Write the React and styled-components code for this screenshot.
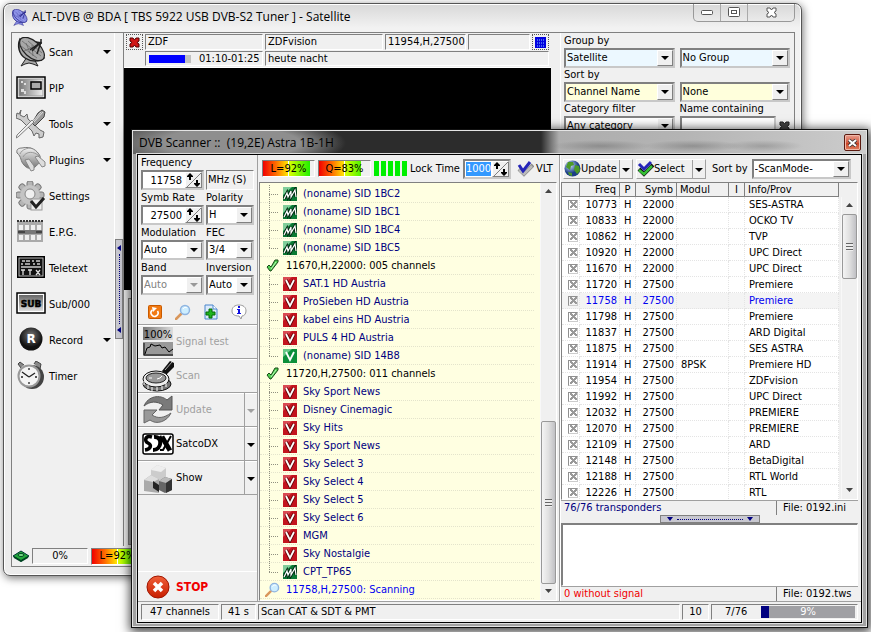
import React from 'react';
import styled, { createGlobalStyle, css } from 'styled-components';

const GlobalStyle = createGlobalStyle`
    * {
        box-sizing: border-box;
    }
    body {
        margin: 0;
        background: #fff;
        color: #000;
        font: 11px/14px "DejaVu Sans Condensed", "Liberation Sans", sans-serif;
    }
    button, input, select, textarea {
        margin: 0;
        padding: 0;
        border: 0;
        border-radius: 0;
        background: transparent;
        color: inherit;
        font: inherit;
        outline: none;
    }
`;

const Desktop = styled.div`
    position: relative;
    min-height: 100vh;
    overflow: hidden;
`;

/* ---------- shared parts ---------- */

const sunken = css`
    border: 1px solid;
    border-color: #808080 #fff #fff #808080;
`;

const deep = css`
    border: 2px solid;
    border-color: #808080 #c8c8c8 #c8c8c8 #808080;
`;

const Cell = styled.div`
    ${sunken}
    display: flex;
    align-items: center;
    justify-content: ${props => props.$align || 'flex-start'};
    flex: ${props => props.$width ? `0 0 ${props.$width}px` : '1'};
    min-width: 0;
    height: ${props => props.$height || 16}px;
    padding: 0 2px;
    white-space: nowrap;
    overflow: hidden;
`;

const SelectBox = styled.span`
    ${deep}
    display: grid;
    flex: ${props => props.$width ? `0 0 ${props.$width}px` : '1'};
    min-width: 0;
    height: 20px;
    background: ${props => props.$bg || '#fff'};
    color: ${props => props.$off ? '#808080' : '#000'};
`;

const NativeSelect = styled.select`
    grid-area: 1 / 1;
    appearance: none;
    width: 100%;
    min-width: 0;
    height: 16px;
    padding: 0 18px 0 1px;
    opacity: 1;
`;

const DropKnob = styled.span`
    grid-area: 1 / 1;
    justify-self: end;
    display: flex;
    align-items: center;
    justify-content: center;
    width: 16px;
    height: 16px;
    border: 1px solid;
    border-color: #fff #808080 #808080 #fff;
    background: #f0f0f0;
    pointer-events: none;
`;

const Arrow = ({color = '#000'}) => (
    <svg width="8" height="4" viewBox="0 0 8 4" aria-hidden="true"><path d="M0 0h8L4 4z" fill={color} /></svg>
);

const Select = ({label, value, bg, off, width}) => (
    <SelectBox $bg={bg} $off={off} $width={width}>
        <NativeSelect aria-label={label} disabled={off}>
            <option>{value}</option>
        </NativeSelect>
        <DropKnob><Arrow color={off ? '#999' : '#000'} /></DropKnob>
    </SelectBox>
);

const SpinBox = styled.span`
    ${deep}
    display: flex;
    flex: 0 0 ${props => props.$width}px;
    min-width: 0;
    height: 20px;
    background: #fff;
`;

const SpinInput = styled.input`
    flex: 1;
    width: 0;
    min-width: 0;
    height: 16px;
    padding: 0 3px;
    text-align: right;
    ${props => props.$picked && css`
        padding: 0;
        background: #3399ff;
        color: #fff;
        border: 1px solid #fff;
        text-align: left;
    `}
`;

const SpinKnob = styled.button`
    flex: none;
    width: 17px;
    height: 16px;
    border: 1px solid;
    border-color: #fff #808080 #808080 #fff;
    background: #f0f0f0;
`;

const SpinField = ({label, value, width, picked}) => (
    <SpinBox $width={width}>
        <SpinInput aria-label={label} defaultValue={value} $picked={picked} />
        <SpinKnob aria-label={`${label} up or down`}>
            <svg width="15" height="14" viewBox="0 0 15 14" style={{display: 'block'}}>
                <path d="M1 14L15 0" stroke="#808080" />
                <path d="M4 0l3 3v1H5v3H3V4H1V3zM11 14l-3-3v-1h2V7h2v3h2v1z" fill="#000" />
            </svg>
        </SpinKnob>
    </SpinBox>
);

const Meter = styled.div`
    ${sunken}
    display: flex;
    align-items: center;
    justify-content: center;
    flex: 0 0 53px;
    height: 17px;
    background:
        linear-gradient(to right, transparent ${props => props.$level}%, #f0f0f0 ${props => props.$level}%),
        linear-gradient(to right, #f00000 0%, #ff6a00 25%, #ffe800 49%, #fff 50%, #d8ff00 52%, #20f000 92%);
`;

/* ---------- icons ---------- */

const Svg = ({size = 30, box = 30, children}) => (
    <svg width={size} height={size} viewBox={`0 0 ${box} ${box}`} aria-hidden="true">{children}</svg>
);

const DishIcon = ({size, tint = '#a8a8a8', dark = '#222'}) => (
    <Svg size={size}>
        <path d="M11 20L5 29l4-2 4-1 4 1 5 2-5-9z" fill={tint} stroke={dark} />
        <path d="M4 2C1 9 3 17 9 21c6 4 14 4 19 0z" fill={tint} stroke={dark} strokeWidth="1.500" />
        <ellipse cx="16" cy="12" rx="15" ry="8" transform="rotate(42 16 12)" fill={tint} stroke={dark} strokeWidth="1.200" />
        <path d="M6 4l19 15M5 9l16 12M12 4l14 12M10 6l4 10M16 8l1 11M8 14l14-6" stroke={dark} strokeWidth=".6" opacity=".6" />
        <path d="M14 13l11-8M16 14l9-9M21 17l4-12M20 5l6 1M25 2v5" stroke={dark} strokeWidth="1.500" />
    </Svg>
);

const PipIcon = () => (
    <Svg>
        <defs>
            <linearGradient id="pip"><stop stopColor="#777" /><stop offset="1" stopColor="#eee" /></linearGradient>
        </defs>
        <rect x="1" y="4" width="28" height="21" fill="#fff" stroke="#000" strokeWidth="1.500" />
        <rect x="3" y="6" width="24" height="17" fill="url(#pip)" stroke="#999" />
        <rect x="15" y="9" width="10" height="7" fill="#aaa" stroke="#000" strokeWidth="1.500" />
        <path d="M5 8h2v2H5zM8 10h2v2H8zM5 16h3v3H5zM8 18h2v3H8z" fill="#ddd" />
    </Svg>
);

const ToolsIcon = () => (
    <Svg>
        <path d="M5 1l-1 5 4 2 3-3 1 5 12 11 4 2-1 5-4 1v-4l-3-1-2 3-2-5L5 11 0 9l1-5 2 1z" fill="#ccc" stroke="#666" />
        <path d="M22 4l4-3 3 2-1 5-9 9-3-3z" fill="#999" stroke="#444" />
        <path d="M18 13L2 28l-2 1 1-3 15-15z" fill="#eee" stroke="#666" strokeWidth=".8" />
        <path d="M27 3l-9 10M25 3l-8 9" stroke="#ddd" />
    </Svg>
);

const PluginIcon = () => (
    <Svg>
        <defs>
            <linearGradient id="plug" x2="0" y2="1"><stop stopColor="#f4f4f4" /><stop offset="1" stopColor="#777" /></linearGradient>
        </defs>
        <path d="M1 8c-1-4 2-5 5-5 9-2 15 2 18 8 1 4-1 8-5 11-4 2-8 2-11-2C4 16 6 12 1 8z" fill="url(#plug)" stroke="#777" />
        <path d="M7 12c3-6 11-6 16-1M4 9c2-5 8-6 11-6" fill="none" stroke="#999" />
        <path d="M9 15l4-1 5 7v4l-3 1zM19 12l3-1 7 6v4l-3 1z" fill="#ddd" stroke="#888" />
    </Svg>
);

const GearIcon = () => (
    <Svg>
        <g transform="translate(14 14)" fill="#b5b5b5" stroke="#777">
            {[0, 45, 90, 135].map(a => <rect key={a} x="-3" y="-14" width="6" height="28" rx="2" transform={`rotate(${a})`} />)}
        </g>
        <circle cx="14" cy="14" r="10" fill="#c4c4c4" />
        <circle cx="14" cy="13" r="5" fill="#f0f0f0" stroke="#888" />
        <rect x="15" y="18" width="11" height="11" fill="#eee" stroke="#999" />
        <path d="M15 20l5 6 8-9" fill="none" stroke="#222" strokeWidth="3" />
    </Svg>
);

const GuideIcon = () => (
    <Svg>
        <rect x="1" y="4" width="26" height="21" fill="#aaa" />
        <path d="M1 4h26" stroke="#333" strokeWidth="2" strokeDasharray="2 1" />
        <path d="M3 8h4v5H3zM9 8h4v5H9zM15 8h4v5h-4zM21 8h4v5h-4zM3 18h4v5H3zM9 18h4v5H9zM15 18h4v5h-4zM21 18h4v5h-4z" fill="#eee" />
        <path d="M2 15h7M20 15h6" stroke="#444" strokeWidth="3" />
        <rect x="9" y="13" width="11" height="4" fill="#777" />
    </Svg>
);

const TeletextIcon = () => (
    <Svg>
        <rect x="1" y="3" width="28" height="22" fill="#000" />
        <rect x="3" y="5" width="24" height="18" fill="#111" stroke="#bbb" />
        <path d="M6 8h3M10 8h4M16 8h2M20 8h4M5 11h2M9 11h5M17 11h2M21 11h3M5 14h20" stroke="#ccc" strokeWidth="1.500" />
        <path d="M5 17h4M7 17v5M12 17h4M14 17v5M20 17l4 5M24 17l-4 5" stroke="#ddd" strokeWidth="1.300" />
    </Svg>
);

const SubIcon = () => (
    <Svg>
        <defs>
            <linearGradient id="sub" x2="0" y2="1"><stop stopColor="#666" /><stop offset="1" stopColor="#ddd" /></linearGradient>
        </defs>
        <rect x="1" y="4" width="28" height="20" fill="#fff" stroke="#000" strokeWidth="1.500" />
        <rect x="3" y="6" width="24" height="16" fill="url(#sub)" />
        <text x="15" y="18" textAnchor="middle" fontFamily="DejaVu Sans" fontSize="9" fontWeight="bold" stroke="#000" strokeWidth=".5">SUB</text>
    </Svg>
);

const RecordIcon = () => (
    <Svg>
        <defs>
            <radialGradient id="rec" cy=".35"><stop stopColor="#777" /><stop offset="1" stopColor="#111" /></radialGradient>
        </defs>
        <circle cx="15" cy="14" r="11.500" fill="url(#rec)" />
        <text x="15" y="18" textAnchor="middle" fontFamily="DejaVu Sans" fontSize="12" fontWeight="bold" fill="#fff">R</text>
    </Svg>
);

const TimerIcon = () => (
    <Svg>
        <path d="M8 4L4 1 2 3l3 4M18 3l2-3 5 3-1 5" fill="#888" stroke="#444" />
        <circle cx="16" cy="16" r="12" fill="#444" />
        <circle cx="13" cy="15" r="10.500" fill="#f4f4f4" stroke="#999" strokeWidth="2" />
        <path d="M13 16L6 11M13 16l6-4M13 7v2M13 21v2M5 16h2M19 16h2" stroke="#222" strokeWidth="1.300" fill="none" />
    </Svg>
);

const LensIcon = ({size = 16}) => (
    <Svg size={size} box={16}>
        <path d="M1 15l5-5" stroke="#d9975c" strokeWidth="2.500" strokeLinecap="round" />
        <circle cx="10" cy="6" r="4.500" fill="#cdeeff" stroke="#8fb4e0" strokeWidth="1.500" />
        <path d="M8 5c1-2 3-2 4-1" stroke="#fff" fill="none" />
    </Svg>
);

const ReloadIcon = () => (
    <Svg size={16} box={16}>
        <rect x="1.500" y="1.500" width="13" height="13" rx="1" fill="#f27a12" stroke="#c85a00" />
        <path d="M5.500 6a3.500 3.500 0 1 0 5 1" fill="none" stroke="#fff" strokeWidth="1.600" />
        <path d="M5 3l5 1-4 4z" fill="#fff" />
    </Svg>
);

const AddIcon = () => (
    <Svg size={16} box={16}>
        <path d="M2 1h8l4 4v10H2z" fill="#dbeafc" stroke="#4a86cc" />
        <path d="M10 1v4h4" fill="#fff" stroke="#4a86cc" />
        <path d="M6 5h3v3h3v3H9v3H6v-3H3V8h3z" fill="#1eb41e" stroke="#066a06" />
    </Svg>
);

const InfoIcon = () => (
    <Svg size={16} box={16}>
        <path d="M8 1c4 0 7 2 7 6 0 3-2 5-4 5l-1 3-2-3c-5 0-7-2-7-5 0-4 3-6 7-6z" fill="#fff" stroke="#999" />
        <path d="M7 2h2v2H7zM6 5h3v4h1v1H6V9h1V6H6z" fill="#1010e0" />
    </Svg>
);

const SignalIcon = () => (
    <Svg size={32} box={32}>
        <defs><linearGradient id="sig"><stop stopColor="#777" /><stop offset="1" stopColor="#ddd" /></linearGradient></defs>
        <rect x="1" y="1" width="30" height="13" fill="url(#sig)" />
        <text x="16" y="12" textAnchor="middle" fontFamily="DejaVu Sans Condensed" fontSize="11">100%</text>
        <rect x="1" y="16" width="30" height="14" fill="#999" />
        <path d="M2 17v12h29M3 28l2-6 3-1 1-3 4 2 5-1 2 3 3-1 4 5 4-3" fill="none" stroke="#000" />
    </Svg>
);

const ScanIcon = () => (
    <Svg size={32} box={32}>
        <path d="M20 11l8-10 4 2v4l-9 9z" fill="#111" />
        <path d="M23 10l7-8" stroke="#aaa" />
        <ellipse cx="15" cy="24" rx="14" ry="7" fill="#777" stroke="#111" />
        <ellipse cx="14" cy="19" rx="13" ry="8" fill="#eee" stroke="#111" />
        <ellipse cx="14" cy="18" rx="10" ry="5" fill="#999" stroke="#222" />
        <path d="M2 21v4M6 25v4M10 27v4M15 27v4M20 26v4M24 23v4" stroke="#fff" />
        <path d="M7 18h3M15 19l3-1 2-2" stroke="#fff" fill="none" />
    </Svg>
);

const UpdateIcon = () => (
    <Svg size={32} box={32}>
        <path d="M2 12C6 2 18 0 25 6l5-4v14H17l4-5C15 7 8 7 2 12z" fill="#7a7a7a" stroke="#555" />
        <path d="M29 19c-4 9-15 12-21 7l-6 3V16h13l-5 5c6 4 12 3 19-2z" fill="#999" stroke="#666" />
    </Svg>
);

const SdxIcon = () => (
    <Svg size={32} box={32}>
        <rect x="1" y="6" width="30" height="20" rx="2" fill="#fff" stroke="#000" strokeWidth="1.500" />
        <path d="M10 9c-7-2-8 4-4 6s3 6-3 7" fill="none" stroke="#000" strokeWidth="3.500" />
        <path d="M12 9c9-1 8 13-1 13" fill="none" stroke="#000" strokeWidth="4" />
        <path d="M18 8l9 15M21 8l8 14" stroke="#000" strokeWidth="2.500" />
        <path d="M29 8l-8 14h-3" fill="none" stroke="#000" strokeWidth="2" />
    </Svg>
);

const ShowIcon = () => (
    <Svg size={32} box={32}>
        <path d="M9 8l6-5 9 3v12H9z" fill="#ccc" /><path d="M9 8l6-5 9 3-5 4z" fill="#eee" />
        <path d="M2 18l7-5 8 4v14l-15-2z" fill="#aaa" /><path d="M2 18l7-5 8 4-6 3z" fill="#ddd" />
        <path d="M11 19l6 4v7l-6-4z" fill="#222" />
        <path d="M17 19l6-4 7 2v11l-7 3-6-3z" fill="#666" /><path d="M17 19l6-4 7 2-6 4z" fill="#bbb" />
        <path d="M24 21l6-4v11l-6 3z" fill="#333" />
    </Svg>
);

const StopIcon = () => (
    <Svg size={24} box={24}>
        <defs><linearGradient id="stop" x2="0" y2="1"><stop stopColor="#f0603a" /><stop offset="1" stopColor="#c81e00" /></linearGradient></defs>
        <circle cx="12" cy="12" r="11" fill="url(#stop)" stroke="#a01500" />
        <path d="M8 8l8 8M16 8l-8 8" stroke="#fff" strokeWidth="3.500" />
    </Svg>
);

const TickIcon = () => (
    <Svg size={14} box={14}>
        <path d="M2 8l2-2 2 2 4-7h3v2l-7 9H5z" fill="#4fd04f" stroke="#1b4a1b" />
        <path d="M6 10l5-7" stroke="#b9f5b9" />
    </Svg>
);

const VideoIcon = () => (
    <Svg size={14} box={14}>
        <rect width="14" height="14" fill="#c3141e" />
        <path d="M0 0h9L0 8z" fill="#f08088" opacity=".5" />
        <path d="M3 3l4 8 4-8" fill="none" stroke="#5a0000" strokeWidth="3.500" />
        <path d="M3 3l4 8 4-8" fill="none" stroke="#fff" strokeWidth="1.800" />
    </Svg>
);

const GreenVideoIcon = () => (
    <Svg size={14} box={14}>
        <rect width="14" height="14" fill="#0c8f3a" />
        <path d="M0 0h9L0 8z" fill="#8fe0a8" opacity=".7" />
        <path d="M3 3l4 8 4-8" fill="none" stroke="#fff" strokeWidth="1.800" />
    </Svg>
);

const WaveIcon = () => (
    <Svg size={14} box={14}>
        <rect width="14" height="14" fill="#0b7a34" />
        <path d="M0 0h9L0 8z" fill="#9fe4b4" opacity=".8" />
        <path d="M1 12l3-6 1 4 3-6v6l4-7 1 7" fill="none" stroke="#002a10" strokeWidth="3" />
        <path d="M1 12l3-6 1 4 3-6v6l4-7 1 7" fill="none" stroke="#fff" strokeWidth="1.200" />
    </Svg>
);

const GlobeIcon = () => (
    <Svg size={17} box={17}>
        <defs><radialGradient id="globe" cx=".35" cy=".3"><stop stopColor="#cfe2ff" /><stop offset="1" stopColor="#1c3f86" /></radialGradient></defs>
        <circle cx="8.500" cy="8.500" r="8" fill="url(#globe)" />
        <path d="M4 2l5 0 1 3-3 1-1 4-4-3zM11 5l4 1 1 5-3 3-3-4zM4 12l4 1 0 3-3-1z" fill="#4c9a28" />
    </Svg>
);

const DoubleTickIcon = ({gray}) => (
    <Svg size={17} box={17}>
        <path d="M2 9l5 5 9-9" fill="none" stroke={gray ? '#888' : '#111'} strokeWidth="4" />
        <path d="M2 10l5 4 8-8" fill="none" stroke={gray ? '#bbb' : '#35c035'} strokeWidth="2.500" />
        <path d={gray ? 'M2 5l4 6 7-9' : 'M2 4l5 5 7-7'} fill="none" stroke="#2424b8" strokeWidth="3" />
    </Svg>
);

const CrossIcon = ({color = '#d01818', edge = '#500'}) => (
    <Svg size={11} box={11}>
        <path d="M1 1h3l1.500 2L7 1h3v3L8 5.500 10 7v3H7L5.500 8 4 10H1V7l2-1.500L1 4z" fill={color} stroke={edge} />
    </Svg>
);

/* ---------- main window ---------- */

const MainWindow = styled.section`
    position: absolute;
    inset: 3px 69px 56px 3px;
    display: flex;
    flex-direction: column;
    padding: 0 6px 8px 7px;
    border: 1px solid #555;
    border-radius: 7px;
    background: linear-gradient(#d8d8d8, #f2f2f2 24px, #ececec);
    box-shadow: inset 0 0 0 1px #fff, 1px 2px 9px rgba(0, 0, 0, 0.55);
`;

const MainTitle = styled.header`
    display: flex;
    align-items: flex-start;
    justify-content: space-between;
    flex: 0 0 28px;
`;

const Caption = styled.h1`
    display: flex;
    align-items: center;
    gap: 4px;
    margin: 0;
    height: 26px;
    font: 12px/16px "Open Sans", "Noto Sans", sans-serif;
    white-space: nowrap;
`;

const WinButtons = styled.div`
    display: flex;
    height: 18px;
    border: 1px solid #999;
    border-top: 0;
    border-radius: 0 0 5px 5px;
`;

const WinButton = styled.button`
    display: flex;
    align-items: center;
    justify-content: center;
    width: ${props => props.$wide ? 46 : 27}px;
    border-right: ${props => props.$wide ? 0 : 1}px solid #aaa;
`;

const MainBody = styled.div`
    display: flex;
    flex-direction: column;
    flex: 1;
    min-height: 0;
    border: 1px solid #808080;
    background: #f0f0f0;
`;

const MainColumns = styled.div`
    display: flex;
    flex: 1;
    min-height: 0;
`;

const SideNav = styled.nav`
    flex: 0 0 103px;
    padding-top: 1px;
    border-right: 1px solid #fff;
`;

const NavButton = styled.button`
    display: flex;
    align-items: center;
    gap: 3px;
    width: 100%;
    height: 36px;
    padding: 0 3px 0 4px;
    text-align: left;
`;

const NavText = styled.span`
    flex: 1;
    padding-top: 2px;
`;

const SideGrip = styled.div`
    display: flex;
    flex-direction: column;
    align-items: center;
    justify-content: space-between;
    flex: 0 0 8px;
    align-self: flex-start;
    height: 100px;
    margin-top: 206px;
    padding: 5px 0;
    border: 1px solid #808080;
    background: #c8c8d0;
`;

const DotsDown = styled.div`
    flex: 1;
    margin: 3px 0;
    border-left: 1px dotted #000080;
`;

const Center = styled.div`
    display: flex;
    flex-direction: column;
    flex: 1;
    min-width: 0;
    border-left: 1px solid #808080;
`;

const InfoGrid = styled.div`
    display: grid;
    grid-template-columns: 17px 118px 118px 81px 1fr 17px;
    gap: 1px 2px;
    padding: 1px 2px;
    border-bottom: 1px solid #fff;
`;

const Screen = styled.div`
    flex: 0 0 222px;
    background: #000;
`;

const UnderScreen = styled.div`
    flex: 1;
    margin: 8px 0 1px 4px;
    border: 1px solid #808080;
    background: linear-gradient(#d8d8d8, #aaa);
`;

const WideCell = styled(Cell)`
    grid-column: ${props => props.$from} / ${props => props.$to};
`;

const Elapsed = styled.span`
    width: 42px;
    height: 8px;
    margin: 0 8px 0 1px;
    background: linear-gradient(to right, #00f 86%, #c0c0c0 86%);
`;

const IconButton = styled.button`
    display: flex;
    align-items: center;
    justify-content: center;
    border: ${props => props.$dotted ? '1px dotted #555' : 0};
`;

const Filters = styled.aside`
    display: grid;
    grid-template-columns: repeat(2, minmax(0, 1fr));
    grid-auto-rows: 14px 20px;
    gap: 0 5px;
    align-content: start;
    flex: 0 0 234px;
    min-width: 0;
    margin-left: 9px;
    padding: 1px 4px 1px 3px;
    border-left: 1px solid #fff;
`;

const FilterLabel = styled.span`
    align-self: center;
    white-space: nowrap;
`;

const NameRow = styled.div`
    display: flex;
    gap: 3px;
`;

const NameInput = styled.input`
    ${deep}
    flex: 1;
    width: 0;
    min-width: 0;
    background: #fff;
`;

const MainStatus = styled.footer`
    display: flex;
    align-items: center;
    gap: 3px;
    flex: 0 0 20px;
    padding: 0 1px;
`;

const menu = [
    {name: 'Scan', icon: <DishIcon />, more: true},
    {name: 'PIP', icon: <PipIcon />, more: true},
    {name: 'Tools', icon: <ToolsIcon />, more: true},
    {name: 'Plugins', icon: <PluginIcon />, more: true},
    {name: 'Settings', icon: <GearIcon />},
    {name: 'E.P.G.', icon: <GuideIcon />},
    {name: 'Teletext', icon: <TeletextIcon />},
    {name: 'Sub/000', icon: <SubIcon />},
    {name: 'Record', icon: <RecordIcon />, more: true},
    {name: 'Timer', icon: <TimerIcon />},
];

const Player = () => (
    <MainWindow>
        <MainTitle>
            <Caption>
                <DishIcon size={17} tint="#8f94e8" dark="#2c2c90" />
                ALT-DVB @ BDA [ TBS 5922 USB DVB-S2 Tuner ] - Satellite
            </Caption>
            <WinButtons>
                <WinButton aria-label="Minimize">
                    <svg width="12" height="6"><rect x=".5" y=".5" width="11" height="4" rx="1" fill="#fff" stroke="#555" /></svg>
                </WinButton>
                <WinButton aria-label="Maximize">
                    <svg width="12" height="11"><rect x=".5" y=".5" width="11" height="9" rx="1" fill="#fff" stroke="#555" /><rect x="3.500" y="3.500" width="5" height="3" fill="none" stroke="#555" /></svg>
                </WinButton>
                <WinButton $wide aria-label="Close"><CrossIcon color="#fff" edge="#555" /></WinButton>
            </WinButtons>
        </MainTitle>
        <MainBody>
            <MainColumns>
                <SideNav>
                    {menu.map(item => (
                        <NavButton key={item.name}>
                            {item.icon}
                            <NavText>{item.name}</NavText>
                            {item.more && <Arrow />}
                        </NavButton>
                    ))}
                </SideNav>
                <SideGrip>
                    <svg width="4" height="6"><path d="M4 0v6L0 3z" fill="#000080" /></svg>
                    <DotsDown />
                    <svg width="4" height="6"><path d="M4 0v6L0 3z" fill="#000080" /></svg>
                </SideGrip>
                <Center>
                    <InfoGrid>
                        <IconButton aria-label="Close channel" $dotted><CrossIcon /></IconButton>
                        <Cell>ZDF</Cell>
                        <Cell>ZDFvision</Cell>
                        <Cell>11954,H,27500</Cell>
                        <Cell />
                        <IconButton aria-label="Full screen" $dotted>
                            <svg width="11" height="11"><rect width="11" height="11" fill="#0000e0" /><path d="M2 3h8M2 6h8M2 9h8" stroke="#8cf" strokeDasharray="1 1" /></svg>
                        </IconButton>
                        <WideCell $from={2} $to={3} $height={15}><Elapsed />01:10-01:25</WideCell>
                        <WideCell $from={3} $to={7} $height={15}>heute nacht</WideCell>
                    </InfoGrid>
                    <Screen />
                    <UnderScreen />
                </Center>
                <Filters>
                    <FilterLabel>Group by</FilterLabel><span />
                    <Select label="Group by" value="Satellite" bg="#ecf8ff" />
                    <Select label="Then group by" value="No Group" bg="#ecf8ff" />
                    <FilterLabel>Sort by</FilterLabel><span />
                    <Select label="Sort by" value="Channel Name" bg="#ffffdc" />
                    <Select label="Then sort by" value="None" bg="#ffffdc" />
                    <FilterLabel>Category filter</FilterLabel>
                    <FilterLabel as="label" htmlFor="namePart">Name containing</FilterLabel>
                    <Select label="Category filter" value="Any category" />
                    <NameRow>
                        <NameInput id="namePart" />
                        <IconButton aria-label="Clear name"><CrossIcon color="#444" edge="#222" /></IconButton>
                    </NameRow>
                </Filters>
            </MainColumns>
            <MainStatus>
                <svg width="16" height="12" viewBox="0 0 16 12"><path d="M0 6l8-5 8 5-8 5z" fill="#22aa3c" stroke="#033" /><path d="M1 7l7 4 7-4" stroke="#042" strokeWidth="2" fill="none" /><ellipse cx="8" cy="5" rx="3" ry="1.500" fill="#7fe08c" stroke="#042" /></svg>
                <Cell $width={56} $align="center">0%</Cell>
                <Meter $level={92}>L=92%</Meter>
            </MainStatus>
        </MainBody>
    </MainWindow>
);

/* ---------- scanner window ---------- */

const ScannerWindow = styled.section`
    position: absolute;
    inset: 129px 3px 4px 131px;
    display: flex;
    flex-direction: column;
    padding: 0 5px 4px;
    border: 1px solid #111;
    background: #a2a2a2;
    box-shadow: inset 0 0 0 1px #e4e4e4, 1px 2px 10px 2px rgba(0, 0, 0, 0.75);
`;

const ScannerTitle = styled.header`
    display: flex;
    align-items: center;
    justify-content: space-between;
    flex: 0 0 23px;
    margin: 1px -4px 0;
    padding: 0 5px 0 6px;
    background:
        radial-gradient(ellipse 50px 6px at 468px 15px, rgba(90, 90, 90, 0.4), transparent),
        radial-gradient(ellipse 50px 6px at 560px 15px, rgba(90, 90, 90, 0.4), transparent),
        radial-gradient(ellipse 40px 6px at 630px 15px, rgba(110, 110, 110, 0.4), transparent),
        radial-gradient(ellipse 115px 26px at 98px 12px, #8e8e8e 60%, transparent 100%),
        linear-gradient(to right, #5a5a5a, #2c2c2c 210px, #2c2c2c 408px, #777 418px, #adadad 426px, #b4b4b4 75%, #ccc);
`;

const ScannerName = styled.h2`
    margin: 0;
    font: 12px/16px "Open Sans", "Noto Sans", sans-serif;
    white-space: pre;
`;

const CloseButton = styled.button`
    display: flex;
    align-items: center;
    justify-content: center;
    width: 17px;
    height: 17px;
    border: 1px solid #5c1a10;
    border-radius: 2px;
    background: linear-gradient(#eaa090, #d25a42 50%, #c83c20 51%, #e08060);
    box-shadow: inset 0 0 0 1px #f0b8a8;
`;

const Client = styled.div`
    display: flex;
    flex-direction: column;
    flex: 1;
    min-height: 0;
    border: 1px solid #000;
    background: #f0f0f0;
    box-shadow: 0 0 0 1px #ddd;
`;

const Columns = styled.div`
    display: flex;
    flex: 1;
    min-height: 0;
`;

const LeftPane = styled.div`
    display: flex;
    flex-direction: column;
    flex: 0 0 119px;
    border-right: 1px solid #a0a0a0;
`;

const Form = styled.div`
    display: grid;
    grid-template-columns: 63px 48px;
    grid-auto-rows: 15px 20px;
    gap: 0 2px;
    padding: 0 3px;
`;

const FormLabel = styled.span`
    align-self: center;
    white-space: nowrap;
`;

const Unit = styled.span`
    ${sunken}
    padding: 2px 1px;
    white-space: nowrap;
`;

const Shortcuts = styled.div`
    display: flex;
    gap: 12px;
    height: 29px;
    padding: 4px 9px 0;
`;

const ActionRow = styled.div`
    display: flex;
    height: 34px;
    border-top: 1px solid #a0a0a0;
    box-shadow: inset 0 1px #fff;
    ${props => props.$last && 'height: 35px; border-bottom: 1px solid #a0a0a0;'}
`;

const ActionButton = styled.button`
    display: flex;
    align-items: center;
    gap: 2px;
    flex: 1;
    padding: 1px 0 0 4px;
    color: ${props => props.disabled ? '#a0a0a0' : '#000'};
`;

const MoreButton = styled.button`
    width: 13px;
    border-left: 1px solid #a0a0a0;
`;

const Spacer = styled.div`
    flex: 1;
`;

const StopButton = styled.button`
    display: flex;
    align-items: center;
    gap: 6px;
    height: 30px;
    padding-left: 8px;
    border-top: 1px solid #fff;
    color: #f00000;
    font: bold 12px/16px "DejaVu Sans Condensed", sans-serif;
`;

const MidPane = styled.div`
    display: flex;
    flex-direction: column;
    flex: 1;
    min-width: 0;
    padding: 0 2px 0 1px;
    border-right: 1px solid #a0a0a0;
`;

const MidTools = styled.div`
    display: flex;
    align-items: center;
    gap: 3px;
    flex: 0 0 27px;
    padding: 0 3px;
    white-space: nowrap;
`;

const Bars = styled.div`
    flex: none;
    width: 33px;
    height: 15px;
    background: repeating-linear-gradient(to right, #00f000 0 5px, #f0f0f0 5px 7px);
`;

const CheckLabel = styled.label`
    display: flex;
    align-items: center;
    gap: 2px;
    padding-left: 1px;

    input {
        appearance: none;
    }
`;

const ListFrame = styled.div`
    display: flex;
    flex: 1;
    min-height: 0;
    border: 1px solid #808080;
    border-right-color: #fff;
    border-bottom-color: #fff;
    background: ${props => props.$bg};
`;

const Tree = styled.ul`
    flex: 1;
    min-width: 0;
    margin: 0;
    padding: 2px 6px 0 0;
    list-style: none;
    overflow: hidden;
`;

const Leaf = styled.li`
    display: flex;
    align-items: center;
    height: 18px;
    border-bottom: 1px dotted #e4e4cc;
    color: ${props => props.$color};
    white-space: nowrap;
`;

const Branch = styled.span`
    align-self: stretch;
    width: 9px;
    margin: 0 5px 0 9px;
    background:
        repeating-linear-gradient(to bottom, #909080 0 1px, transparent 1px 2px) 0 0 / 1px ${props => props.$end ? '9px' : '100%'} no-repeat,
        repeating-linear-gradient(to right, #909080 0 1px, transparent 1px 2px) 0 9px / 9px 1px no-repeat;
`;

const GroupMark = styled.span`
    display: flex;
    width: 20px;
    padding-left: 5px;
`;

const LeafText = styled.span`
    padding-left: 6px;
`;

const Track = styled.div`
    display: flex;
    flex-direction: column;
    align-items: center;
    justify-content: space-between;
    flex: 0 0 16px;
    padding: 6px 0 7px;
    background: #f0f0f0;
    border-left: 1px solid #f8f8f8;
`;

const Thumb = styled.div`
    display: flex;
    align-items: center;
    justify-content: center;
    width: 15px;
    height: ${props => props.$size}px;
    margin-bottom: ${props => props.$below};
    border: 1px solid #999;
    border-radius: 2px;
    background: linear-gradient(to right, #f4f4f4, #e0e0e0 50%, #c0c0c4);
`;

const ThumbLines = styled.div`
    width: 7px;
    height: 8px;
    background: repeating-linear-gradient(#666 0 1px, #eee 1px 3px);
`;

const Scrollbar = ({size, below}) => (
    <Track>
        <svg width="7" height="4"><path d="M0 4h7L3.500 0z" fill="#444" /></svg>
        <Spacer />
        <Thumb $size={size} $below={below}><ThumbLines /></Thumb>
        <svg width="7" height="4"><path d="M0 0h7L3.500 4z" fill="#444" /></svg>
    </Track>
);

const RightPane = styled.div`
    display: flex;
    flex-direction: column;
    flex: 0 0 301px;
    padding-right: 3px;
    border-left: 1px solid #fff;
`;

const RightTools = styled.div`
    display: flex;
    align-items: center;
    gap: 3px;
    flex: 0 0 27px;
    padding: 0 7px 0 2px;
    white-space: nowrap;
`;

const SplitButton = styled.div`
    display: flex;
    height: 20px;
    border: 1px solid;
    border-color: #fff #a0a0a0 #a0a0a0 #fff;
`;

const SplitMain = styled.button`
    display: flex;
    align-items: center;
    width: 55px;
`;

const SplitMore = styled.button`
    width: 13px;
    border-left: 1px solid #a0a0a0;
`;

const SortLabel = styled.label`
    display: flex;
    align-items: center;
    gap: 4px;
    flex: 1;
    padding-left: 3px;
`;

const TableFrame = styled(ListFrame)`
    flex: 1 1 0;
    overflow: hidden;
`;

const Table = styled.table`
    flex: 1;
    align-self: flex-start;
    width: 100%;
    min-width: 0;
    table-layout: fixed;
    border-collapse: separate;
    border-spacing: 0;
    white-space: nowrap;
`;

const Th = styled.th`
    width: ${props => props.$width ? `${props.$width}px` : 'auto'};
    height: 14px;
    padding: 0 3px;
    border-right: 1px solid #808080;
    border-bottom: 1px solid #808080;
    background: #f0f0f0;
    font-weight: normal;
    line-height: 13px;
    text-align: ${props => props.$align || 'left'};
    overflow: hidden;
`;

const Tr = styled.tr`
    color: ${props => props.$active ? '#0000f0' : '#000'};
    background: ${props => props.$active ? '#f4f4f4' : 'transparent'};
`;

const Td = styled.td`
    height: 16px;
    padding: 0 ${props => props.$right ? 2 : 4}px;
    border-right: 1px dotted #e4e4e4;
    border-bottom: 1px dotted #e4e4e4;
    line-height: 15px;
    text-align: ${props => props.$right ? 'right' : 'left'};
`;

const RowCheck = styled.input`
    appearance: none;
    display: block;
    width: 10px;
    height: 10px;
    margin: 0 0 0 2px;
    border: 1px solid;
    border-color: #909090 #ccc #ccc #909090;
    background:
        linear-gradient(45deg, transparent 40%, #999 40% 60%, transparent 60%) center / 7px 7px no-repeat,
        linear-gradient(-45deg, transparent 40%, #999 40% 60%, transparent 60%) center / 7px 7px no-repeat;
`;

const TableSide = styled.div`
    display: flex;
    flex-direction: column;
    flex: 0 0 18px;
    padding: 14px 0 0 2px;
    background: #f0f0f0;

    & > div {
        flex: 1;
    }
`;

const PaneStatus = styled.div`
    display: flex;
    flex: 0 0 15px;
    border-top: 1px solid #a0a0a0;
    color: ${props => props.$color};
`;

const StatusText = styled.span`
    flex: 1;
    padding-left: 3px;
`;

const FileText = styled.span`
    flex: 0 0 82px;
    padding-left: 6px;
    border-left: 1px solid #808080;
    color: #000;
    white-space: nowrap;
`;

const BottomGrip = styled.div`
    display: flex;
    align-items: center;
    gap: 4px;
    align-self: center;
    flex: 0 0 8px;
    width: 100px;
    padding: 0 6px;
    border: 1px solid #808080;
    background: #c8c8d0;
`;

const DotsAcross = styled.div`
    flex: 1;
    border-top: 1px dotted #000080;
`;

const Log = styled.textarea`
    flex: 0 0 63px;
    border: 1px solid;
    border-width: 2px 1px 1px 2px;
    border-color: #808080 #fff #fff #808080;
    background: #fff;
    resize: none;
`;

const StatusBar = styled.footer`
    display: flex;
    align-items: center;
    gap: 2px;
    flex: 0 0 21px;
    padding: 0 3px;
    border-top: 1px solid #a0a0a0;
`;

const Progress = styled.div`
    flex: 0 0 94px;
    height: 12px;
    margin-left: auto;
    background: linear-gradient(to right, #000080 9%, #a0a0a4 9%);
    color: #fff;
    line-height: 12px;
    text-align: center;
`;

const channels = [
    ['wave', '(noname) SID 1BC2'],
    ['wave', '(noname) SID 1BC1'],
    ['wave', '(noname) SID 1BC4'],
    ['wave', '(noname) SID 1BC5', true],
    ['group', '11670,H,22000: 005 channels'],
    ['video', 'SAT.1 HD Austria'],
    ['video', 'ProSieben HD Austria'],
    ['video', 'kabel eins HD Austria'],
    ['video', 'PULS 4 HD Austria'],
    ['green', '(noname) SID 14B8', true],
    ['group', '11720,H,27500: 011 channels'],
    ['video', 'Sky Sport News'],
    ['video', 'Disney Cinemagic'],
    ['video', 'Sky Hits'],
    ['video', 'Sky Sport News'],
    ['video', 'Sky Select 3'],
    ['video', 'Sky Select 4'],
    ['video', 'Sky Select 5'],
    ['video', 'Sky Select 6'],
    ['video', 'MGM'],
    ['video', 'Sky Nostalgie'],
    ['wave', 'CPT_TP65', true],
    ['scan', '11758,H,27500: Scanning'],
];

const leafIcons = {
    wave: <WaveIcon />,
    video: <VideoIcon />,
    green: <GreenVideoIcon />,
};

const transponders = [
    ['10773', '22000', '', 'SES-ASTRA'],
    ['10833', '22000', '', 'OCKO TV'],
    ['10862', '22000', '', 'TVP'],
    ['10920', '22000', '', 'UPC Direct'],
    ['11670', '22000', '', 'UPC Direct'],
    ['11720', '27500', '', 'Premiere'],
    ['11758', '27500', '', 'Premiere'],
    ['11798', '27500', '', 'Premiere'],
    ['11837', '27500', '', 'ARD Digital'],
    ['11875', '27500', '', 'SES ASTRA'],
    ['11914', '27500', '8PSK', 'Premiere HD'],
    ['11954', '27500', '', 'ZDFvision'],
    ['11992', '27500', '', 'UPC Direct'],
    ['12032', '27500', '', 'PREMIERE'],
    ['12070', '27500', '', 'PREMIERE'],
    ['12109', '27500', '', 'ARD'],
    ['12148', '27500', '', 'BetaDigital'],
    ['12188', '27500', '', 'RTL World'],
    ['12226', '27500', '', 'RTL'],
];

const actions = [
    {name: 'Signal test', icon: <SignalIcon />, off: true},
    {name: 'Scan', icon: <ScanIcon />, off: true},
    {name: 'Update', icon: <UpdateIcon />, off: true, more: true},
    {name: 'SatcoDX', icon: <SdxIcon />, more: true},
    {name: 'Show', icon: <ShowIcon />, more: true},
];

const TreeRow = ({kind, text, end}) => {
    if (kind === 'group' || kind === 'scan') {
        return (
            <Leaf $color={kind === 'scan' ? '#0000f0' : '#000'}>
                <GroupMark>{kind === 'scan' ? <LensIcon size={15} /> : <TickIcon />}</GroupMark>
                <LeafText>{text}</LeafText>
            </Leaf>
        );
    }
    return (
        <Leaf $color="#000080">
            <Branch $end={end} />
            {leafIcons[kind]}
            <LeafText>{text}</LeafText>
        </Leaf>
    );
};

const Controls = () => (
    <LeftPane>
        <Form>
            <FormLabel>Frequency</FormLabel><span />
            <SpinField label="Frequency" value="11758" width={63} />
            <Unit>MHz (S)</Unit>
            <FormLabel>Symb Rate</FormLabel><FormLabel>Polarity</FormLabel>
            <SpinField label="Symb Rate" value="27500" width={63} />
            <Select label="Polarity" value="H" />
            <FormLabel>Modulation</FormLabel><FormLabel>FEC</FormLabel>
            <Select label="Modulation" value="Auto" />
            <Select label="FEC" value="3/4" />
            <FormLabel>Band</FormLabel><FormLabel>Inversion</FormLabel>
            <Select label="Band" value="Auto" off />
            <Select label="Inversion" value="Auto" />
        </Form>
        <Shortcuts>
            <IconButton aria-label="Reload"><ReloadIcon /></IconButton>
            <IconButton aria-label="Find"><LensIcon /></IconButton>
            <IconButton aria-label="Add"><AddIcon /></IconButton>
            <IconButton aria-label="Info"><InfoIcon /></IconButton>
        </Shortcuts>
        {actions.map((action, index) => (
            <ActionRow key={action.name} $last={index === actions.length - 1}>
                <ActionButton disabled={action.off}>{action.icon}{action.name}</ActionButton>
                {action.more && (
                    <MoreButton aria-label={`${action.name} menu`} disabled={action.off}>
                        <Arrow color={action.off ? '#a0a0a0' : '#000'} />
                    </MoreButton>
                )}
            </ActionRow>
        ))}
        <Spacer />
        <StopButton><StopIcon />STOP</StopButton>
    </LeftPane>
);

const Transponders = () => (
    <RightPane>
        <RightTools>
            <SplitButton>
                <SplitMain><GlobeIcon />Update</SplitMain>
                <SplitMore aria-label="Update menu"><Arrow /></SplitMore>
            </SplitButton>
            <SplitButton>
                <SplitMain><DoubleTickIcon />Select</SplitMain>
                <SplitMore aria-label="Select menu"><Arrow /></SplitMore>
            </SplitButton>
            <SortLabel>
                Sort by
                <Select label="Sort by" value="-ScanMode-" />
            </SortLabel>
        </RightTools>
        <TableFrame $bg="#fff">
            <Table>
                <thead>
                    <tr>
                        <Th $width={18} />
                        <Th $width={40} $align="right">Freq</Th>
                        <Th $width={16} $align="center">P</Th>
                        <Th $width={41} $align="right">Symb</Th>
                        <Th $width={52}>Modul</Th>
                        <Th $width={16} $align="center">I</Th>
                        <Th>Info/Prov</Th>
                    </tr>
                </thead>
                <tbody>
                    {transponders.map(([freq, symb, modul, info]) => (
                        <Tr key={freq} $active={freq === '11758'}>
                            <Td><RowCheck type="checkbox" aria-label={freq} /></Td>
                            <Td $right>{freq}</Td>
                            <Td>H</Td>
                            <Td $right>{symb}</Td>
                            <Td>{modul}</Td>
                            <Td />
                            <Td>{info}</Td>
                        </Tr>
                    ))}
                </tbody>
            </Table>
            <TableSide><Scrollbar size={65} below="209px" /></TableSide>
        </TableFrame>
        <PaneStatus $color="#000080">
            <StatusText>76/76 transponders</StatusText>
            <FileText>File: 0192.ini</FileText>
        </PaneStatus>
        <BottomGrip>
            <svg width="6" height="4"><path d="M0 0h6L3 4z" fill="#000080" /></svg>
            <DotsAcross />
            <svg width="6" height="4"><path d="M0 0h6L3 4z" fill="#000080" /></svg>
        </BottomGrip>
        <Log aria-label="Log" />
        <PaneStatus $color="#f00000">
            <StatusText>0 without signal</StatusText>
            <FileText>File: 0192.tws</FileText>
        </PaneStatus>
    </RightPane>
);

const Scanner = () => (
    <ScannerWindow>
        <ScannerTitle>
            <ScannerName>DVB Scanner ::  (19,2E) Astra 1B-1H</ScannerName>
            <CloseButton aria-label="Close scanner">
                <svg width="9" height="8" viewBox="0 0 9 8"><path d="M1 1l7 6M8 1L1 7" stroke="#333" strokeWidth="3.500" /><path d="M1 1l7 6M8 1L1 7" stroke="#fff" strokeWidth="2" /></svg>
            </CloseButton>
        </ScannerTitle>
        <Client>
            <Columns>
                <Controls />
                <MidPane>
                    <MidTools>
                        <Meter $level={92}>L=92%</Meter>
                        <Meter $level={83}>Q=83%</Meter>
                        <Bars />
                        Lock Time
                        <SpinField label="Lock Time" value="1000" width={48} picked />
                        <CheckLabel>
                            <input type="checkbox" defaultChecked />
                            <DoubleTickIcon gray />
                            VLT
                        </CheckLabel>
                    </MidTools>
                    <ListFrame $bg="#ffffe1">
                        <Tree>
                            {channels.map(([kind, text, end], index) => (
                                <TreeRow key={index} kind={kind} text={text} end={end} />
                            ))}
                        </Tree>
                        <Scrollbar size={163} below="5px" />
                    </ListFrame>
                </MidPane>
                <Transponders />
            </Columns>
            <StatusBar>
                <Cell $width={78} $align="center">47 channels</Cell>
                <Cell $width={35} $align="center">41 s</Cell>
                <Cell>Scan CAT &amp; SDT &amp; PMT</Cell>
                <Cell $width={27} $align="center">10</Cell>
                <Cell $width={147}>
                    <span style={{paddingLeft: 11}}>7/76</span>
                    <Progress>9%</Progress>
                </Cell>
            </StatusBar>
        </Client>
    </ScannerWindow>
);

const App = () => (
    <Desktop>
        <GlobalStyle />
        <Player />
        <Scanner />
    </Desktop>
);

export default App;
